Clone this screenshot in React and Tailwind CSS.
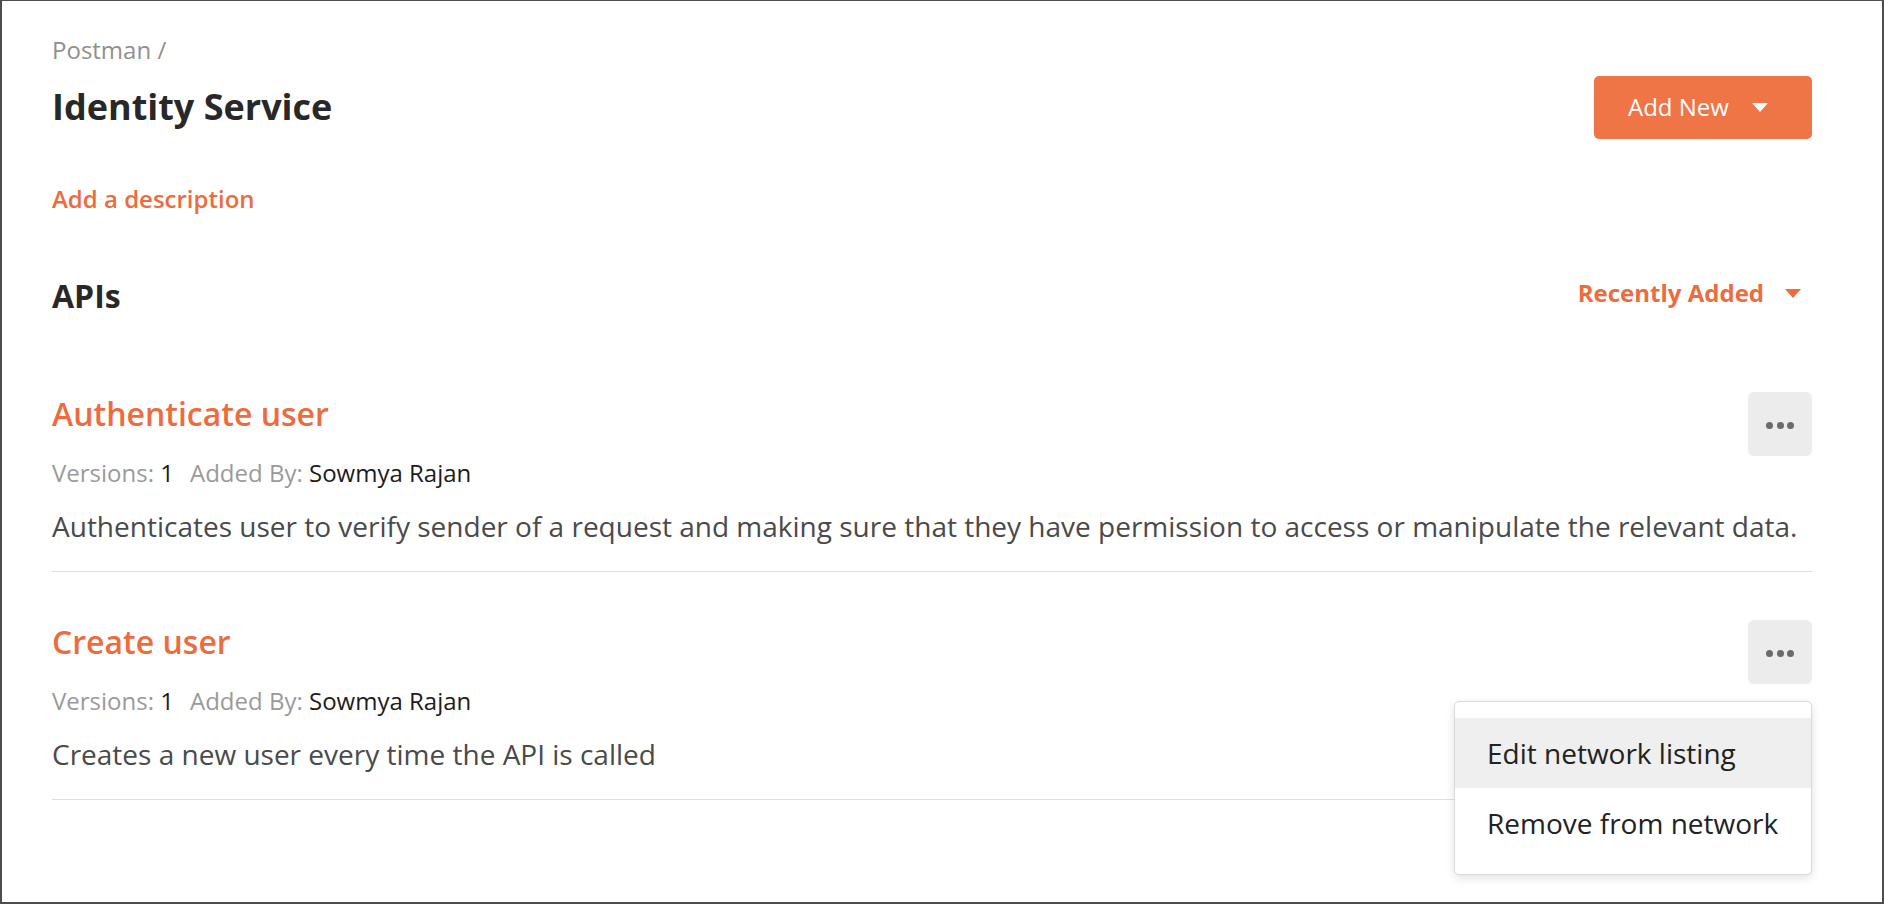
import React from "react";

function Caret({ className }) {
  return (
    <svg width="16" height="9" viewBox="0 0 16 9" className={className}>
      <path d="M0 0 L16 0 L8 9 Z" fill="currentColor" />
    </svg>
  );
}

function Dots() {
  return (
    <div className="flex items-center gap-[3.5px] mt-[3px]">
      <div className="w-[7px] h-[7px] rounded-full bg-[#6b6b6b]" />
      <div className="w-[7px] h-[7px] rounded-full bg-[#6b6b6b]" />
      <div className="w-[7px] h-[7px] rounded-full bg-[#6b6b6b]" />
    </div>
  );
}

function ApiItem({ title, desc, menu }) {
  return (
    <div className="border-b border-[#e0e0e0] pb-[24px]">
      <div className="flex items-start justify-between h-[48px]">
        <div className="text-[32px] leading-[48px] font-semibold text-[#ec6c3d]">{title}</div>
        <div className="relative mt-[2px]">
          <button className="w-[64px] h-[64px] rounded-[6px] bg-[#ececec] flex items-center justify-center">
            <Dots />
          </button>
          {menu && (
            <div className="absolute right-0 top-[81px] w-[358px] bg-white border border-[#dadada] rounded-[5px] shadow-[0_3px_10px_rgba(0,0,0,0.12)] py-[16px] z-10">
              <div className="h-[70px] flex items-center pl-[32px] bg-[#efefef] text-[28px] text-[#222222]">
                Edit network listing
              </div>
              <div className="h-[70px] flex items-center pl-[32px] text-[28px] text-[#222222]">
                Remove from network
              </div>
            </div>
          )}
        </div>
      </div>
      <div className="mt-[17px] text-[24px] leading-[36px] flex">
        <span className="text-[#9a9a9a]">Versions:&nbsp;</span>
        <span className="text-[#1c1c1c]">1</span>
        <span className="text-[#9a9a9a] ml-[16px]">Added By:&nbsp;</span>
        <span className="text-[#1c1c1c]">Sowmya Rajan</span>
      </div>
      <div className="mt-[14px] text-[28px] leading-[42px] text-[#4a4a4a]">{desc}</div>
    </div>
  );
}

export default function App() {
  return (
    <div className="w-[1884px] h-[904px] bg-white border-2 border-t border-[#4d4d4d] overflow-hidden font-['Open_Sans',sans-serif]">
      <div className="pt-[31px] pl-[50px] pr-[70px]">
        <div className="text-[24px] leading-[36px] text-[#909090]">Postman /</div>
        <div className="mt-[8px] flex items-center justify-between h-[62px]">
          <h1 className="text-[36px] leading-[48px] font-bold text-[#282828]">Identity Service</h1>
          <button className="h-[63px] w-[218px] rounded-[5px] bg-[#ef7446] text-white text-[24px] flex items-center pl-[34px]">
            <span>Add New</span>
            <Caret className="ml-[23px] text-white" />
          </button>
        </div>
        <div className="mt-[43px] text-[24px] leading-[36px] font-semibold text-[#ec6c3d]">Add a description</div>
        <div className="mt-[55px] flex items-center justify-between">
          <h2 className="text-[32px] leading-[48px] font-bold text-[#282828]">APIs</h2>
          <div className="flex items-center mb-[6px] mr-[11px] text-[#ec6c3d]">
            <span className="text-[24px] leading-[36px] font-bold">Recently Added</span>
            <Caret className="ml-[21px]" />
          </div>
        </div>
        <div className="mt-[70px] flex flex-col gap-[46px]">
          <ApiItem
            title="Authenticate user"
            desc="Authenticates user to verify sender of a request and making sure that they have permission to access or manipulate the relevant data."
          />
          <ApiItem
            title="Create user"
            desc="Creates a new user every time the API is called"
            menu
          />
        </div>
      </div>
    </div>
  );
}
